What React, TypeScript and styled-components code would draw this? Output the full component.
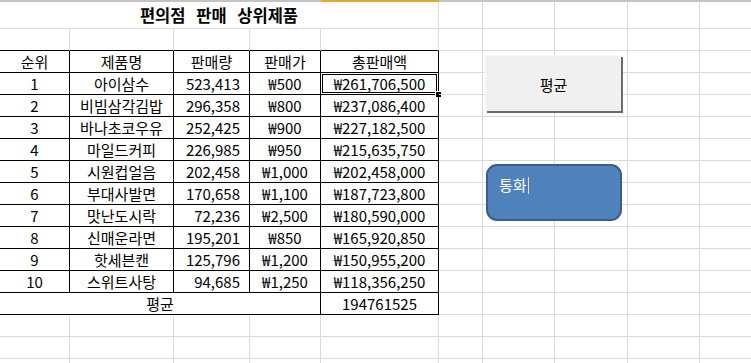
import React from 'react';
import styled, { createGlobalStyle } from 'styled-components';

const GlobalStyle = createGlobalStyle`
  html, body {
    margin: 0;
    padding: 0;
    background: #ffffff;
  }
  body {
    font-family: "Noto Sans CJK KR", "Noto Sans", sans-serif;
    color: #000000;
  }
`;

const GRID = '#dadada';
const INK = '#000000';

// column widths incl. the 1px right line, A..J
const COLS = [70, 104, 76, 71, 118, 44, 72, 73, 72, 72];

type Line = 'grid' | 'table';
type Align = 'left' | 'center' | 'right';

const Page = styled.div`
  position: relative;
  width: 751px;
  height: 363px;
  overflow: hidden;
`;

const Sheet = styled.div`
  display: grid;
  grid-template-columns: ${COLS.map((w) => `${w}px`).join(' ')};
  grid-template-rows: 2px 27px;
  grid-auto-rows: 22px;
  width: max-content;
`;

const EdgeCell = styled.div<{ $active?: boolean }>`
  background: ${(p) => (p.$active ? '#e3a934' : '#c3c3c3')};
`;

const Cell = styled.div<{ $right?: Line; $bottom?: Line; $align?: Align; $span?: number; $pad?: number }>`
  position: relative;
  box-sizing: border-box;
  display: flex;
  align-items: center;
  justify-content: ${(p) =>
    p.$align === 'right' ? 'flex-end' : p.$align === 'left' ? 'flex-start' : 'center'};
  grid-column: span ${(p) => p.$span ?? 1};
  border-right: 1px solid ${(p) => (p.$right === 'table' ? INK : GRID)};
  border-bottom: 1px solid ${(p) => (p.$bottom === 'table' ? INK : GRID)};
  padding: 0 ${(p) => p.$pad ?? 3}px 0 3px;
  font-size: 15px;
  line-height: 20px;
  white-space: nowrap;
`;

const Title = styled(Cell)`
  font-size: 16.5px;
  font-weight: 700;
  word-spacing: 7px;
  padding-bottom: 1px;
`;

const Selection = styled.div`
  position: absolute;
  top: -1px;
  left: -1px;
  right: -1px;
  bottom: -1px;
  border: 1px solid ${INK};
  box-shadow: inset 0 0 0 1px #ffffff, inset 0 0 0 2px ${INK};
  pointer-events: none;
`;

const FillHandle = styled.div`
  position: absolute;
  right: -4px;
  bottom: -4px;
  width: 5px;
  height: 5px;
  background: ${INK};
  border: 1px solid #ffffff;
`;

const MacroButton = styled.div`
  position: absolute;
  left: 485px;
  top: 55px;
  width: 135px;
  height: 54px;
  display: flex;
  align-items: center;
  justify-content: center;
  background: #f0f0f0;
  border-top: 1px solid #f7f7f7;
  border-left: 1px solid #f7f7f7;
  box-shadow: 2px 2px 0 #6a6a6a;
  font-size: 15px;
  padding-top: 1px;
`;

const Shape = styled.div`
  position: absolute;
  left: 486px;
  top: 164px;
  width: 136px;
  height: 57px;
  box-sizing: border-box;
  background: #4f81bd;
  border: 2px solid #3a5f8c;
  border-radius: 11px;
  color: #ffffff;
  font-size: 15px;
  line-height: 20px;
  padding: 9px 0 0 11px;
`;

const Caret = styled.span`
  display: inline-block;
  width: 1px;
  height: 17px;
  margin-left: 1px;
  vertical-align: -3px;
  background: #f3d7ea;
`;

const rows = [
  ['1', '아이삼수', '523,413', '₩500', '₩261,706,500'],
  ['2', '비빔삼각김밥', '296,358', '₩800', '₩237,086,400'],
  ['3', '바나초코우유', '252,425', '₩900', '₩227,182,500'],
  ['4', '마일드커피', '226,985', '₩950', '₩215,635,750'],
  ['5', '시원컵얼음', '202,458', '₩1,000', '₩202,458,000'],
  ['6', '부대사발면', '170,658', '₩1,100', '₩187,723,800'],
  ['7', '맛난도시락', '72,236', '₩2,500', '₩180,590,000'],
  ['8', '신매운라면', '195,201', '₩850', '₩165,920,850'],
  ['9', '핫세븐캔', '125,796', '₩1,200', '₩150,955,200'],
  ['10', '스위트사탕', '94,685', '₩1,250', '₩118,356,250'],
];

const headers = ['순위', '제품명', '판매량', '판매가', '총판매액'];

const Blank: React.FC<{ from: number; row: string }> = ({ from, row }) => (
  <>
    {COLS.slice(from).map((_, i) => (
      <Cell key={`${row}-${from + i}`} />
    ))}
  </>
);

const App: React.FC = () => {
  return (
    <Page>
      <GlobalStyle />
      <Sheet>
        {COLS.map((_, i) => (
          <EdgeCell key={`edge-${i}`} $active={i === 4} />
        ))}

        <Title $span={5}>편의점 판매 상위제품</Title>
        <Blank from={5} row="r1" />

        {headers.map((_, i) => (
          <Cell key={`r2-${i}`} $bottom="table" />
        ))}
        <Blank from={5} row="r2" />

        {headers.map((h) => (
          <Cell key={h} $right="table" $bottom="table">
            {h}
          </Cell>
        ))}
        <Blank from={5} row="r3" />

        {rows.map((r, ri) => (
          <React.Fragment key={r[0]}>
            <Cell $right="table" $bottom="table">{r[0]}</Cell>
            <Cell $right="table" $bottom="table">{r[1]}</Cell>
            <Cell $right="table" $bottom="table" $align="right" $pad={9}>
              {r[2]}
            </Cell>
            <Cell $right="table" $bottom="table">{r[3]}</Cell>
            <Cell $right="table" $bottom="table">
              {r[4]}
              {ri === 0 && (
                <Selection>
                  <FillHandle />
                </Selection>
              )}
            </Cell>
            <Blank from={5} row={`d${ri}`} />
          </React.Fragment>
        ))}

        <Cell $span={4} $right="table" $bottom="table">평균</Cell>
        <Cell $right="table" $bottom="table">194761525</Cell>
        <Blank from={5} row="avg" />

        {[0, 1, 2].map((n) => (
          <Blank key={n} from={0} row={`tail${n}`} />
        ))}
      </Sheet>

      <MacroButton>평균</MacroButton>
      <Shape>
        통화
        <Caret />
      </Shape>
    </Page>
  );
};

export default App;
